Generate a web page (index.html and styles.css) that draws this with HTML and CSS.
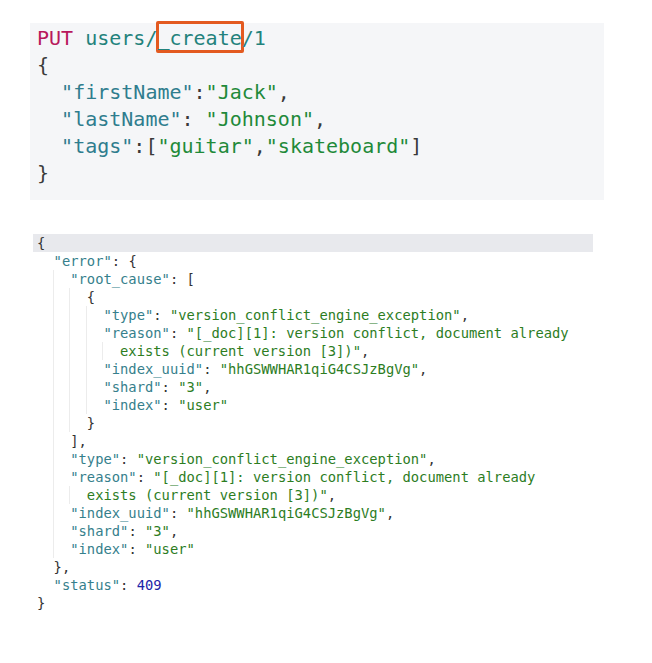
FILE: index.html
```html
<!DOCTYPE html>
<html>
<head>
<meta charset="utf-8">
<link rel="stylesheet" href="styles.css">
</head>
<body>
<div class="req"><div class="ln"><span class="m">PUT</span> <span class="u">users/<span class="mark">_create</span>/1</span></div><div class="ln"><span class="p">{</span></div><div class="ln">  <span class="k">"firstName"</span><span class="p">:</span><span class="s">"Jack"</span><span class="p">,</span></div><div class="ln">  <span class="k">"lastName"</span><span class="p">:</span> <span class="s">"Johnson"</span><span class="p">,</span></div><div class="ln">  <span class="k">"tags"</span><span class="p">:[</span><span class="s">"guitar"</span><span class="p">,</span><span class="s">"skateboard"</span><span class="p">]</span></div><div class="ln"><span class="p">}</span></div></div>
<div class="res">
<div class="rl active"><span class="p">{</span></div>
<div class="rl"><span class="ind"><i class="ig"></i></span><span class="k">"error"</span><span class="p">: {</span></div>
<div class="rl"><span class="ind"><i class="ig"></i><i class="ig"></i></span><span class="k">"root_cause"</span><span class="p">: [</span></div>
<div class="rl"><span class="ind"><i class="ig"></i><i class="ig"></i><i class="ig"></i></span><span class="p">{</span></div>
<div class="rl"><span class="ind"><i class="ig"></i><i class="ig"></i><i class="ig"></i><i class="ig"></i></span><span class="k">"type"</span><span class="p">: </span><span class="s">"version_conflict_engine_exception"</span><span class="p">,</span></div>
<div class="rl"><span class="ind"><i class="ig"></i><i class="ig"></i><i class="ig"></i><i class="ig"></i></span><span class="k">"reason"</span><span class="p">: </span><span class="s">"[_doc][1]: version conflict, document already</span></div>
<div class="rl"><span class="ind"><i class="ig"></i><i class="ig"></i><i class="ig"></i><i class="ig"></i><i class="ig"></i></span><span class="s">exists (current version [3])"</span><span class="p">,</span></div>
<div class="rl"><span class="ind"><i class="ig"></i><i class="ig"></i><i class="ig"></i><i class="ig"></i></span><span class="k">"index_uuid"</span><span class="p">: </span><span class="s">"hhGSWWHAR1qiG4CSJzBgVg"</span><span class="p">,</span></div>
<div class="rl"><span class="ind"><i class="ig"></i><i class="ig"></i><i class="ig"></i><i class="ig"></i></span><span class="k">"shard"</span><span class="p">: </span><span class="s">"3"</span><span class="p">,</span></div>
<div class="rl"><span class="ind"><i class="ig"></i><i class="ig"></i><i class="ig"></i><i class="ig"></i></span><span class="k">"index"</span><span class="p">: </span><span class="s">"user"</span></div>
<div class="rl"><span class="ind"><i class="ig"></i><i class="ig"></i><i class="ig"></i></span><span class="p">}</span></div>
<div class="rl"><span class="ind"><i class="ig"></i><i class="ig"></i></span><span class="p">],</span></div>
<div class="rl"><span class="ind"><i class="ig"></i><i class="ig"></i></span><span class="k">"type"</span><span class="p">: </span><span class="s">"version_conflict_engine_exception"</span><span class="p">,</span></div>
<div class="rl"><span class="ind"><i class="ig"></i><i class="ig"></i></span><span class="k">"reason"</span><span class="p">: </span><span class="s">"[_doc][1]: version conflict, document already</span></div>
<div class="rl"><span class="ind"><i class="ig"></i><i class="ig"></i><i class="ig"></i></span><span class="s">exists (current version [3])"</span><span class="p">,</span></div>
<div class="rl"><span class="ind"><i class="ig"></i><i class="ig"></i></span><span class="k">"index_uuid"</span><span class="p">: </span><span class="s">"hhGSWWHAR1qiG4CSJzBgVg"</span><span class="p">,</span></div>
<div class="rl"><span class="ind"><i class="ig"></i><i class="ig"></i></span><span class="k">"shard"</span><span class="p">: </span><span class="s">"3"</span><span class="p">,</span></div>
<div class="rl"><span class="ind"><i class="ig"></i><i class="ig"></i></span><span class="k">"index"</span><span class="p">: </span><span class="s">"user"</span></div>
<div class="rl"><span class="ind"><i class="ig"></i></span><span class="p">},</span></div>
<div class="rl"><span class="ind"><i class="ig"></i></span><span class="k">"status"</span><span class="p">: </span><span class="n">409</span></div>
<div class="rl"><span class="p">}</span></div>
</div>
</body>
</html>
```
FILE: styles.css
```css
html, body {
  margin: 0;
  padding: 0;
  background: #ffffff;
}

body {
  font-family: "DejaVu Sans Mono", "Liberation Mono", monospace;
}

.req {
  position: relative;
  z-index: 0;
  margin: 23px 0 0 30px;
  width: 567px;
  padding: 2px 0 13px 7px;
  background: #f5f6f8;
  font-size: 20px;
  line-height: 27px;
}

.ln {
  height: 27px;
  white-space: pre;
}

.m { color: #b8185c; }
.u { color: #23827c; }
.k { color: #2f7d8e; }
.s { color: #1f8a3a; }
.p { color: #3a3a3a; }
.n { color: #1c25a8; }

.mark {
  position: relative;
}

.mark::after {
  content: "";
  position: absolute;
  z-index: -1;
  left: -1px;
  right: -2px;
  top: -5px;
  bottom: -3px;
  border: 3px solid #e35a20;
  border-radius: 2px;
}

.res {
  margin: 34px 0 0 33px;
  width: 556px;
  padding-left: 4px;
  font-size: 13.8px;
  line-height: 18px;
}

.res .k { color: #367f8c; }
.res .s { color: #2d7d1f; }
.res .p { color: #333333; }

.rl {
  margin-left: -4px;
  padding-left: 4px;
  white-space: pre;
}

.rl.active {
  background: #e8e9ed;
}

.ind {
  display: inline-block;
  vertical-align: top;
  height: 18px;
}

.ig {
  display: inline-block;
  vertical-align: top;
  width: 2ch;
  height: 18px;
  box-sizing: border-box;
}

.ig:not(:last-child) {
  border-right: 1px solid #ececec;
}
```
